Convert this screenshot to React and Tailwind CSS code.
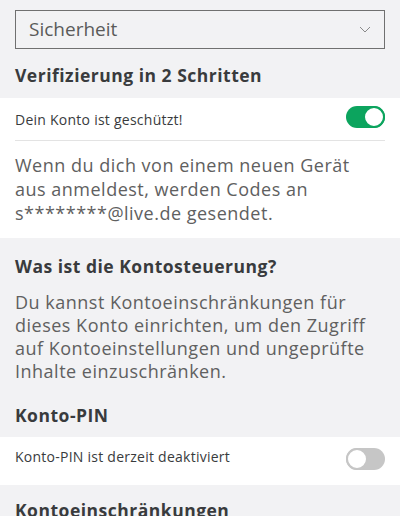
import React, { useState } from 'react';

const font = { fontFamily: '"Open Sans", "Noto Sans", sans-serif' };

function Toggle({ on, onChange }) {
    return (
        <button
            type="button"
            onClick={onChange}
            className={`relative h-[22px] w-[39px] rounded-full mb-[4px] ${on ? 'bg-[#0ca45e]' : 'bg-[#c6c6c6]'}`}
        >
            <span
                className={`absolute top-0 h-[22px] w-[22px] rounded-full bg-white border-2 ${on ? 'right-0 border-[#0ca45e]' : 'left-0 border-[#c6c6c6]'}`}
            />
        </button>
    );
}

export default function App() {
    const [twoStep, setTwoStep] = useState(true);
    const [pin, setPin] = useState(false);

    return (
        <div className="w-[400px] h-[516px] overflow-hidden bg-[#f2f2f4] text-[#393b3d]" style={font}>
            {/* dropdown */}
            <div className="px-[15px] pt-[10px]">
                <div className="h-[39px] border-[1.5px] border-[#707070] flex items-center justify-between px-[13px]">
                    <span className="text-[19px] text-[#5a5a5a]">Sicherheit</span>
                    <svg width="12" height="7" viewBox="0 0 12 7" fill="none" stroke="#8a8a8a" strokeWidth="1">
                        <path d="M1 1l5 5 5-5" />
                    </svg>
                </div>
            </div>

            <h2 className="px-[15px] pt-[14px] pb-[11px] text-[17.5px] font-bold leading-[24px] tracking-[0.5px]">Verifizierung in 2 Schritten</h2>

            <div className="bg-white px-[15px]">
                <div className="h-[43px] flex items-center justify-between border-b border-[#e3e3e3]">
                    <span className="text-[14px] tracking-[0.25px]">Dein Konto ist geschützt!</span>
                    <Toggle on={twoStep} onChange={() => setTwoStep(!twoStep)} />
                </div>
                <p className="pt-[12px] pb-[13px] pr-[10px] text-[18px] leading-[24px] tracking-[0.5px] text-[#606060]">
                    Wenn du dich von einem neuen Gerät aus anmeldest, werden Codes an s********@live.de gesendet.
                </p>
            </div>

            <div className="px-[15px] pt-[16px]">
                <h2 className="text-[17.5px] font-bold leading-[24px] tracking-[0.5px]">Was ist die Kontosteuerung?</h2>
                <p className="mt-[13px] text-[18px] leading-[23px] tracking-[0.5px] text-[#606060]">
                    Du kannst Kontoeinschränkungen für dieses Konto einrichten, um den Zugriff auf Kontoeinstellungen und ungeprüfte Inhalte einzuschränken.
                </p>
                <h2 className="mt-[20px] mb-[10px] text-[17.5px] font-bold leading-[24px] tracking-[0.5px]">Konto-PIN</h2>
            </div>

            <div className="bg-white px-[15px] h-[48px] flex items-center justify-between">
                <span className="text-[14px] tracking-[0.25px] mb-[10px]">Konto-PIN ist derzeit deaktiviert</span>
                <Toggle on={pin} onChange={() => setPin(!pin)} />
            </div>

            <h2 className="px-[15px] pt-[13px] text-[17.5px] font-bold leading-[24px] tracking-[0.5px]">Kontoeinschränkungen</h2>
        </div>
    );
}
